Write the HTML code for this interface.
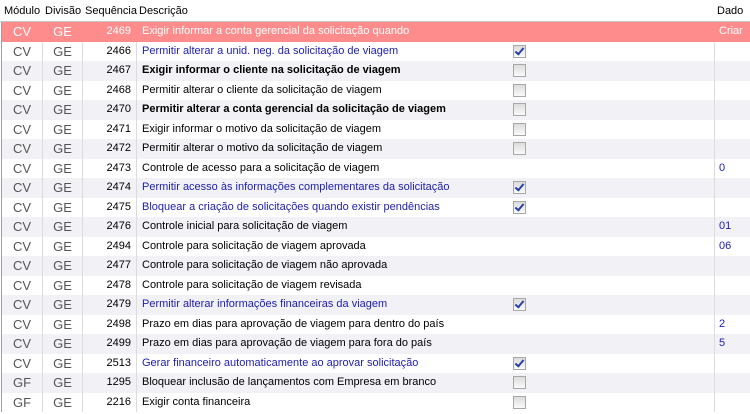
<!DOCTYPE html><html><head><style>
body{margin:0;width:750px;height:414px;overflow:hidden;background:#fff;font-family:"Liberation Sans",sans-serif;font-size:11px;color:#000}
.hd{position:absolute;top:0;left:0;width:750px;height:21px;border-bottom:1px solid #c8c8c8;background:#fff}
.hd span{position:absolute;top:5px}
.r{position:absolute;left:1px;width:749px;height:19.5px;border-left:1px solid #a0a0a0}
.r.o{background:#f1f1f6}
.r div{position:absolute;top:0;height:100%;line-height:19px;border-right:1px solid #dcdcdc;box-sizing:border-box;white-space:nowrap;overflow:hidden}
.m{left:0;width:41px;text-align:center;color:#555;font-size:13px}
.d{left:41px;width:40px;text-align:center;color:#555;font-size:13px}
.s{left:81px;width:54px;text-align:right;padding-right:5px}
.x{left:135px;width:578px;padding-left:5px}
.v{left:713px;width:36px;padding-left:4px;border-right:none!important;color:#2020c0}
.b{font-weight:bold}.bl{color:#2020b0}
.cb{position:absolute;left:376px;top:3px;width:11px;height:11px;border:1px solid #a8a8a8;background:linear-gradient(#dcdcdc,#fafafa)}
.cb.c::after{content:"";position:absolute;left:3px;top:0px;width:3px;height:7px;border:solid #2a3fa8;border-width:0 2px 2px 0;transform:rotate(40deg)}
.sel{background:#ff8c8c!important}
.sel div{color:#fff!important;border-right-color:#ff8c8c}
</style></head><body>
<div class="hd"><span style="left:4px">Módulo</span><span style="left:45px">Divisão</span><span style="left:85px">Sequência</span><span style="left:139px">Descrição</span><span style="left:717px">Dado</span></div>
<div id="t"></div>
<script>
var R=[["CV","2469","Exigir informar a conta gerencial da solicitação quando","","Criar",""],
["CV","2466","Permitir alterar a unid. neg. da solicitação de viagem","bl","",1],
["CV","2467","Exigir informar o cliente na solicitação de viagem","b","",0],
["CV","2468","Permitir alterar o cliente da solicitação de viagem","","",0],
["CV","2470","Permitir alterar a conta gerencial da solicitação de viagem","b","",0],
["CV","2471","Exigir informar o motivo da solicitação de viagem","","",0],
["CV","2472","Permitir alterar o motivo da solicitação de viagem","","",0],
["CV","2473","Controle de acesso para a solicitação de viagem","","0",""],
["CV","2474","Permitir acesso às informações complementares da solicitação","bl","",1],
["CV","2475","Bloquear a criação de solicitações quando existir pendências","bl","",1],
["CV","2476","Controle inicial para solicitação de viagem","","01",""],
["CV","2494","Controle para solicitação de viagem aprovada","","06",""],
["CV","2477","Controle para solicitação de viagem não aprovada","","",""],
["CV","2478","Controle para solicitação de viagem revisada","","",""],
["CV","2479","Permitir alterar informações financeiras da viagem","bl","",1],
["CV","2498","Prazo em dias para aprovação de viagem para dentro do país","","2",""],
["CV","2499","Prazo em dias para aprovação de viagem para fora do país","","5",""],
["CV","2513","Gerar financeiro automaticamente ao aprovar solicitação","bl","",1],
["GF","1295","Bloquear inclusão de lançamentos com Empresa em branco","","",0],
["GF","2216","Exigir conta financeira","","",0]];
var h="";R.forEach(function(r,i){var cb=r[5]===""?"":'<span class="cb'+(r[5]?' c':'')+'"></span>';
h+='<div class="r'+(i%2==0?' o':'')+(i==0?' sel':'')+'" style="top:'+(22+i*19.5)+'px"><div class="m">'+r[0]+'</div><div class="d">GE</div><div class="s">'+r[1]+'</div><div class="x '+r[3]+'">'+r[2]+cb+'</div><div class="v">'+r[4]+'</div></div>';});
document.getElementById("t").innerHTML=h;
</script></body></html>
